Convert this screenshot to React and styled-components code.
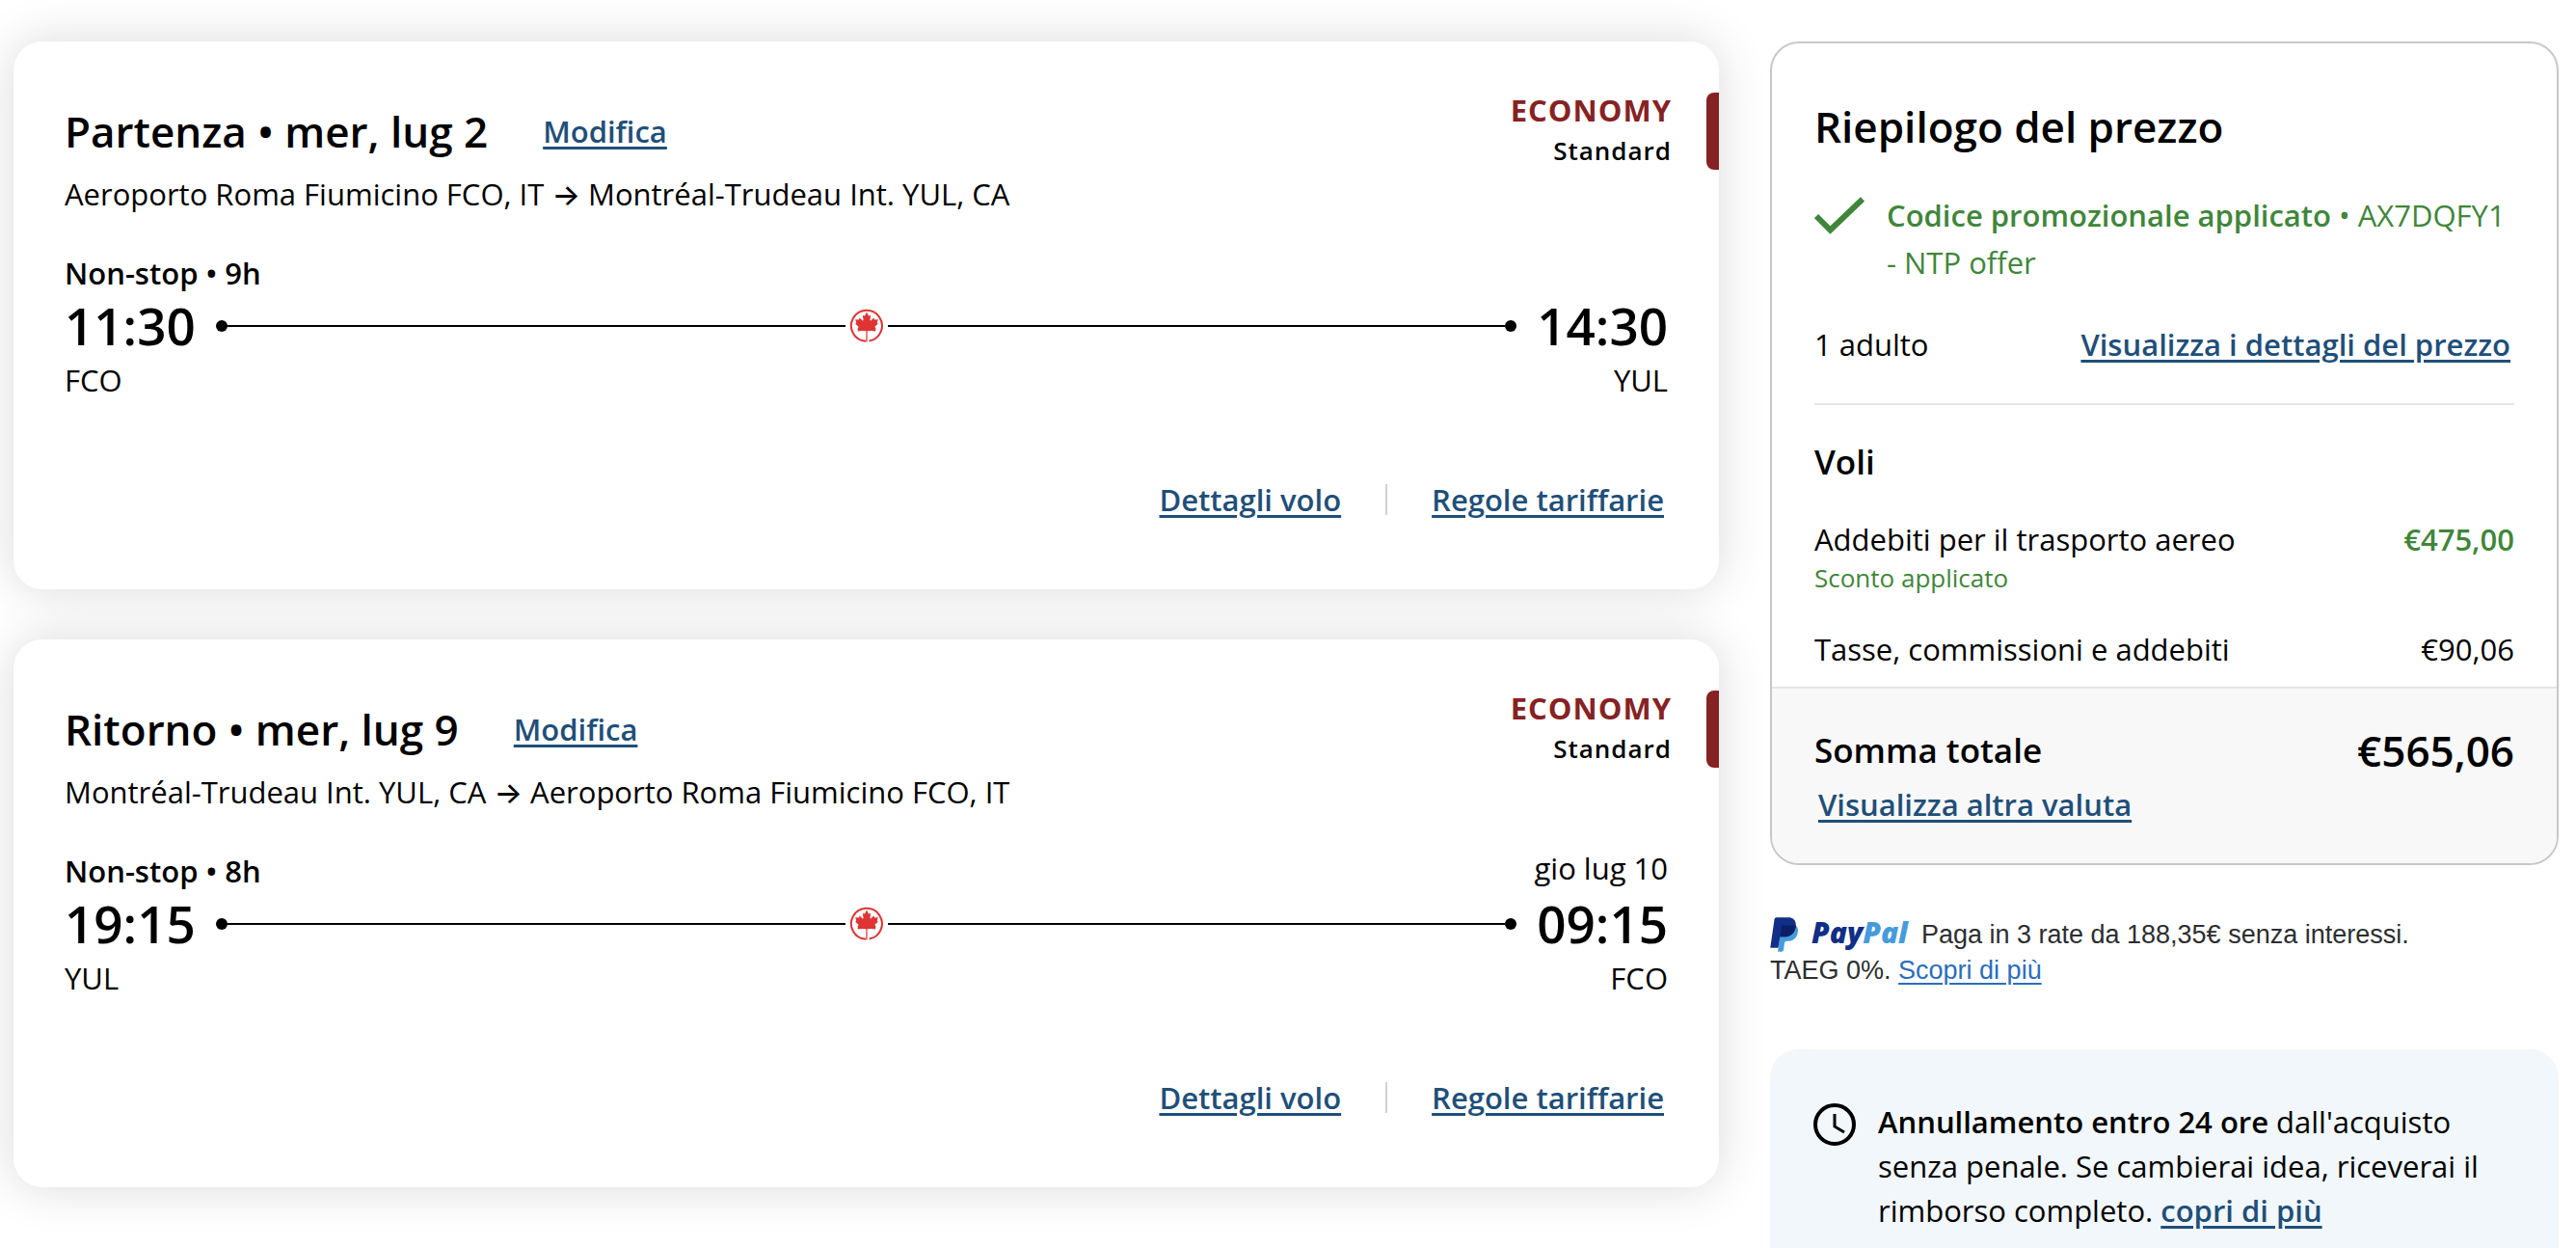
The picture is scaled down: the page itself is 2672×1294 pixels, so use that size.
import styled, { createGlobalStyle } from "styled-components";

const GlobalStyle = createGlobalStyle`
  * {
    box-sizing: border-box;
  }

  body {
    margin: 0;
    background-color: white;
    color: black;
    font-family: "Open Sans", "Noto Sans", sans-serif;
    font-size: 31px;
    line-height: 44px;
  }

  h2, h3, p, dl, dt, dd {
    margin: 0;
    font-weight: 400;
  }

  strong {
    font-weight: 600;
  }
`;

const Page = styled.main`
  display: grid;
  grid-template-columns: minmax(0, 1769fr) minmax(0, 818fr);
  align-items: start;
  gap: 53px;
  padding: 43px 18px 43px 14px;
`;

const Column = styled.div`
  display: flex;
  flex-direction: column;
`;

const Flights = styled(Column)`
  gap: 52px;
`;

const Link = styled.a`
  color: #1f4f79;
  font-weight: ${(props) => props.$weight || 600};
  text-decoration: underline;
  text-decoration-thickness: 3px;
  text-underline-offset: 4px;
`;

/* ---- flight card ---- */

const Card = styled.article`
  padding: 53px 0 71px;
  border-radius: 30px;
  background-color: white;
  box-shadow: 0 0 50px rgba(0, 0, 0, 0.15);
`;

const CardTop = styled.header`
  display: flex;
  justify-content: space-between;
  align-items: flex-start;
  padding-left: 53px;
`;

const Heading = styled.div`
  padding-top: 10px;
`;

const TitleRow = styled.div`
  display: flex;
  align-items: center;
  gap: 57px;
  margin-bottom: 13px;
`;

const Title = styled.h2`
  font-size: 44px;
  line-height: 60px;
  font-weight: 600;
`;

const Arrow = styled.span`
  font-family: Inter, sans-serif;
  font-weight: 500;
  line-height: 1;
`;

const Cabin = styled.div`
  display: flex;
  gap: 36px;
  text-align: right;

  &::after {
    content: "";
    width: 13px;
    border-radius: 8px 0 0 8px;
    background-color: #862223;
  }
`;

const CabinName = styled.p`
  margin-bottom: 4px;
  color: #862223;
  font-size: 31px;
  line-height: 36px;
  font-weight: 700;
  letter-spacing: 1px;
`;

const FareName = styled.p`
  font-size: 26px;
  line-height: 40px;
  font-weight: 600;
  letter-spacing: 1px;
`;

const Segment = styled.div`
  padding: 38px 53px 0;
`;

const Between = styled.div`
  display: flex;
  justify-content: space-between;
`;

const Duration = styled.p`
  font-weight: 600;
`;

const ArrivalDate = styled.p`
  line-height: 38px;
`;

const Times = styled.div`
  display: flex;
  align-items: center;
  padding: 3px 0 4px;
`;

const Time = styled.time`
  font-size: 53px;
  line-height: 60px;
  font-weight: 600;
`;

const Track = styled.div`
  flex: 1;
  display: flex;
  align-items: center;
  margin: 0 21px;
`;

const Dot = styled.span`
  width: 12px;
  height: 12px;
  border-radius: 50%;
  background-color: black;
`;

const Line = styled.span`
  flex: 1;
  height: 2px;
  background-color: black;
`;

const Rondelle = styled.svg`
  width: 36px;
  height: 36px;
  margin: 0 4px;
`;

const CardLinks = styled.nav`
  display: flex;
  justify-content: flex-end;
  align-items: center;
  gap: 46px;
  padding: 80px 57px 0;
`;

const Separator = styled.span`
  width: 2px;
  height: 32px;
  background-color: #d2d2d2;
`;

/* ---- price summary ---- */

const Summary = styled.section`
  overflow: hidden;
  border: 2px solid #c8c8c8;
  border-radius: 30px;
`;

const SummaryBody = styled.div`
  padding: 56px 44px 17px;
`;

const Promo = styled.div`
  display: flex;
  align-items: flex-start;
  gap: 23px;
  padding: 38px 0;
  color: #40863a;
  line-height: 49px;

  svg {
    flex: none;
    margin-top: 5px;
  }
`;

const Passengers = styled(Between)`
  padding: 0 4px 39px 0;
  border-bottom: 2px solid #e5e5e5;
  margin-bottom: 35px;
`;

const Subtitle = styled.h3`
  font-size: 35px;
  line-height: 48px;
  font-weight: 600;
`;

const Prices = styled.dl`
  display: flex;
  flex-direction: column;
  gap: 34px;
  padding-top: 34px;
`;

const Discounted = styled.dd`
  color: #40863a;
  font-weight: 600;
`;

const Note = styled.small`
  display: block;
  color: #40863a;
  font-size: 26px;
  line-height: 36px;
`;

const Total = styled.div`
  padding: 34px 44px 39px;
  border-top: 2px solid #e5e5e5;
  background-color: #f8f8f8;
`;

const TotalRow = styled(Between)`
  align-items: center;
  margin-bottom: 4px;
`;

const Grand = styled.strong`
  font-size: 44px;
  line-height: 60px;
`;

const Currency = styled.p`
  padding-left: 4px;
`;

/* ---- messages under the summary ---- */

const PayLater = styled.p`
  padding: 54px 0 63px;
  color: #2c2e2f;
  font-family: "Liberation Sans", Arial, sans-serif;
  font-size: 27px;
  line-height: 37px;

  a {
    color: #2a6ebb;
    text-decoration-thickness: 2px;
  }
`;

const PayPal = styled.span`
  display: inline-flex;
  align-items: flex-start;
  gap: 13px;
  height: 37px;
  margin-right: 14px;
  vertical-align: bottom;
`;

const Wordmark = styled.span`
  color: #469bdb;
  font-family: "Open Sans", sans-serif;
  font-size: 30px;
  font-style: italic;
  font-weight: 800;
  line-height: 32px;

  b {
    color: #112f86;
    font-weight: 800;
  }
`;

const Notice = styled.aside`
  display: flex;
  align-items: flex-start;
  gap: 23px;
  padding: 52px 45px;
  border-radius: 30px;
  background-color: #f1f7fa;
  line-height: 46px;

  svg {
    flex: none;
    margin-top: 4px;
  }
`;

const AirlineLogo = () => (
  <Rondelle viewBox="0 0 36 36" aria-hidden="true">
    <path
      d="M17 33.8A16 16 0 1 1 20.6 33.6"
      fill="none"
      stroke="#df3434"
      strokeWidth="2"
    />
    <path
      d="M18 3.5L20 7.6 22.2 6.9 21.4 12 22.4 12.4 25.2 9.4 26.3 11.6 29.8 11.2 28.8 14.6 29.8 15.8 26.2 19 27.4 20 27.2 23.6 23 23 18.6 23.2 18.6 34.5H17.3L17.4 23.2 13 23 8.8 23.6 8.6 20 9.8 19 6.2 15.8 7.2 14.6 6.2 11.2 9.7 11.6 10.8 9.4 13.6 12.4 14.6 12 13.8 6.9 16 7.6Z"
      fill="#df3434"
    />
  </Rondelle>
);

const CheckIcon = () => (
  <svg width="52" height="40" viewBox="0 0 52 40" aria-hidden="true">
    <path d="M2 20l14.5 14.5L50 2.5" fill="none" stroke="#40863a" strokeWidth="6" />
  </svg>
);

const ClockIcon = () => (
  <svg width="44" height="44" viewBox="0 0 44 44" fill="none" stroke="black" aria-hidden="true">
    <circle cx="22" cy="22" r="20" strokeWidth="4" />
    <path d="M22 11v13l10 6" strokeWidth="3" />
  </svg>
);

const PayPalMark = () => (
  <svg width="30" height="36" viewBox="0 0 90 110" aria-hidden="true">
    <path
      d="M34 26H81C88 32 90 42 86 54C82 68 70 76 52 76Q46 76 45 82L42 104Q41 109 36 109H24L34 26Z"
      fill="#469bdb"
    />
    <path
      d="M20 1Q14 1 13 7L0 97H25L31 62H50C68 60 81 46 81 22C80 8 70 1 58 1Z"
      fill="#112f86"
    />
    <path d="M37 26H81C80 46 68 60 50 62H31Z" fill="#0a1f66" />
  </svg>
);

const airports = {
  FCO: "Aeroporto Roma Fiumicino FCO, IT",
  YUL: "Montréal-Trudeau Int. YUL, CA",
};

const flights = [
  {
    title: "Partenza • mer, lug 2",
    duration: "Non-stop • 9h",
    departure: "11:30",
    from: "FCO",
    arrival: "14:30",
    to: "YUL",
  },
  {
    title: "Ritorno • mer, lug 9",
    duration: "Non-stop • 8h",
    departure: "19:15",
    from: "YUL",
    arrival: "09:15",
    to: "FCO",
    arrivalDate: "gio lug 10",
  },
];

const FlightCard = ({ flight }) => (
  <Card>
    <CardTop>
      <Heading>
        <TitleRow>
          <Title>{flight.title}</Title>
          <Link href="#modifica">Modifica</Link>
        </TitleRow>
        <p>
          {airports[flight.from]} <Arrow>→</Arrow> {airports[flight.to]}
        </p>
      </Heading>
      <Cabin>
        <div>
          <CabinName>ECONOMY</CabinName>
          <FareName>Standard</FareName>
        </div>
      </Cabin>
    </CardTop>
    <Segment>
      <Between>
        <Duration>{flight.duration}</Duration>
        {flight.arrivalDate ? <ArrivalDate>{flight.arrivalDate}</ArrivalDate> : null}
      </Between>
      <Times>
        <Time>{flight.departure}</Time>
        <Track>
          <Dot />
          <Line />
          <AirlineLogo />
          <Line />
          <Dot />
        </Track>
        <Time>{flight.arrival}</Time>
      </Times>
      <Between>
        <p>{flight.from}</p>
        <p>{flight.to}</p>
      </Between>
    </Segment>
    <CardLinks>
      <Link href="#dettagli">Dettagli volo</Link>
      <Separator />
      <Link href="#regole">Regole tariffarie</Link>
    </CardLinks>
  </Card>
);

const PriceSummary = () => (
  <Summary>
    <SummaryBody>
      <Title>Riepilogo del prezzo</Title>
      <Promo>
        <CheckIcon />
        <p>
          <strong>Codice promozionale applicato</strong> • AX7DQFY1 - NTP offer
        </p>
      </Promo>
      <Passengers>
        <p>1 adulto</p>
        <Link href="#prezzo">Visualizza i dettagli del prezzo</Link>
      </Passengers>
      <Subtitle>Voli</Subtitle>
      <Prices>
        <Between>
          <dt>
            Addebiti per il trasporto aereo
            <Note>Sconto applicato</Note>
          </dt>
          <Discounted>€475,00</Discounted>
        </Between>
        <Between>
          <dt>Tasse, commissioni e addebiti</dt>
          <dd>€90,06</dd>
        </Between>
      </Prices>
    </SummaryBody>
    <Total>
      <TotalRow>
        <Subtitle>Somma totale</Subtitle>
        <Grand>€565,06</Grand>
      </TotalRow>
      <Currency>
        <Link href="#valuta">Visualizza altra valuta</Link>
      </Currency>
    </Total>
  </Summary>
);

const App = () => {
  return (
    <>
      <GlobalStyle />
      <Page>
        <Flights>
          {flights.map((flight) => (
            <FlightCard key={flight.title} flight={flight} />
          ))}
        </Flights>
        <Column>
          <PriceSummary />
          <PayLater>
            <PayPal>
              <PayPalMark />
              <Wordmark>
                <b>Pay</b>Pal
              </Wordmark>
            </PayPal>
            Paga in 3 rate da 188,35€ senza interessi.
            <br />
            TAEG 0%.{" "}
            <Link href="#paypal" $weight={400}>
              Scopri di più
            </Link>
          </PayLater>
          <Notice>
            <ClockIcon />
            <p>
              <strong>Annullamento entro 24 ore</strong> dall'acquisto senza penale. Se
              cambierai idea, riceverai il rimborso completo.{" "}
              <Link href="#annullamento">copri di più</Link>
            </p>
          </Notice>
        </Column>
      </Page>
    </>
  );
};

export default App;
